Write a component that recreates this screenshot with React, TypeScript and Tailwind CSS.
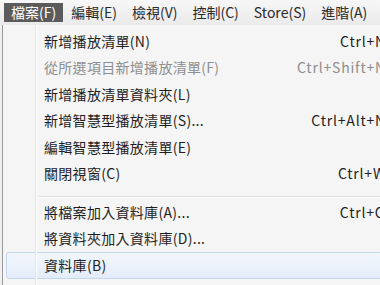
import React from "react"

const font = { fontFamily: '"Noto Sans CJK TC", "Noto Sans", sans-serif' }

const topMenus = [
  { label: "檔案(F)", active: true },
  { label: "編輯(E)" },
  { label: "檢視(V)" },
  { label: "控制(C)" },
  { label: "Store(S)" },
  { label: "進階(A)" },
]

type Item = { label: string; shortcut?: string; disabled?: boolean; hover?: boolean } | "sep"

const items: Item[] = [
  { label: "新增播放清單(N)", shortcut: "Ctrl+N" },
  { label: "從所選項目新增播放清單(F)", shortcut: "Ctrl+Shift+N", disabled: true },
  { label: "新增播放清單資料夾(L)" },
  { label: "新增智慧型播放清單(S)...", shortcut: "Ctrl+Alt+N" },
  { label: "編輯智慧型播放清單(E)" },
  { label: "關閉視窗(C)", shortcut: "Ctrl+W" },
  "sep",
  { label: "將檔案加入資料庫(A)...", shortcut: "Ctrl+O" },
  { label: "將資料夾加入資料庫(D)..." },
  { label: "資料庫(B)", hover: true },
]

export default function App() {
  return (
    <div className="relative h-[285px] w-[380px] overflow-hidden bg-[#f0f0f0] text-[14px] text-[#1e1e1e]" style={font}>
      {/* Menu bar */}
      <div className="flex h-[25px] items-center gap-[1px] bg-gradient-to-b from-[#f7f7f7] to-[#eaeaea] pl-[4px]">
        {topMenus.map((m) => (
          <div
            key={m.label}
            className={
              m.active
                ? "flex h-[19px] items-center bg-[#5b5b5b] px-[7px] text-white"
                : "flex h-[19px] items-center px-[7px] text-[#2a2a2a]"
            }
          >
            {m.label}
          </div>
        ))}
      </div>

      {/* Dropdown */}
      <div className="ml-[2px] flex h-[260px] w-[384px] border-l border-[#9a9a9a] bg-[#f5f5f5]">
        <div className="relative w-full">
          <div className="absolute left-[32px] top-0 h-full w-[1px] bg-[#e2e3e3]" />
          <div className="absolute left-[33px] top-0 h-full w-[1px] bg-white" />
          <div className="flex flex-col pt-[3px]">
            {items.map((it, i) =>
              it === "sep" ? (
                <div key={i} className="ml-[36px] flex h-[12px] flex-col pt-[9px]">
                  <div className="h-[1px] bg-[#dedede]" />
                  <div className="h-[1px] bg-white" />
                </div>
              ) : (
                <div
                  key={i}
                  className={
                    it.hover
                      ? "ml-[3px] flex h-[27px] items-center rounded-[3px] border border-[#c3d7ee] bg-gradient-to-b from-[#f2f7fd] to-[#e3edf9] pl-[37px]"
                      : "flex h-[26.5px] items-center pl-[41px] " + (it.disabled ? "text-[#8e8e8e]" : "")
                  }
                >
                  <span className="flex-1 whitespace-nowrap tracking-[0.3px]">{it.label}</span>
                  {it.shortcut && (
                    <span className="whitespace-nowrap text-right tracking-[0.8px]">{it.shortcut}</span>
                  )}
                </div>
              )
            )}
          </div>
        </div>
      </div>
    </div>
  )
}
